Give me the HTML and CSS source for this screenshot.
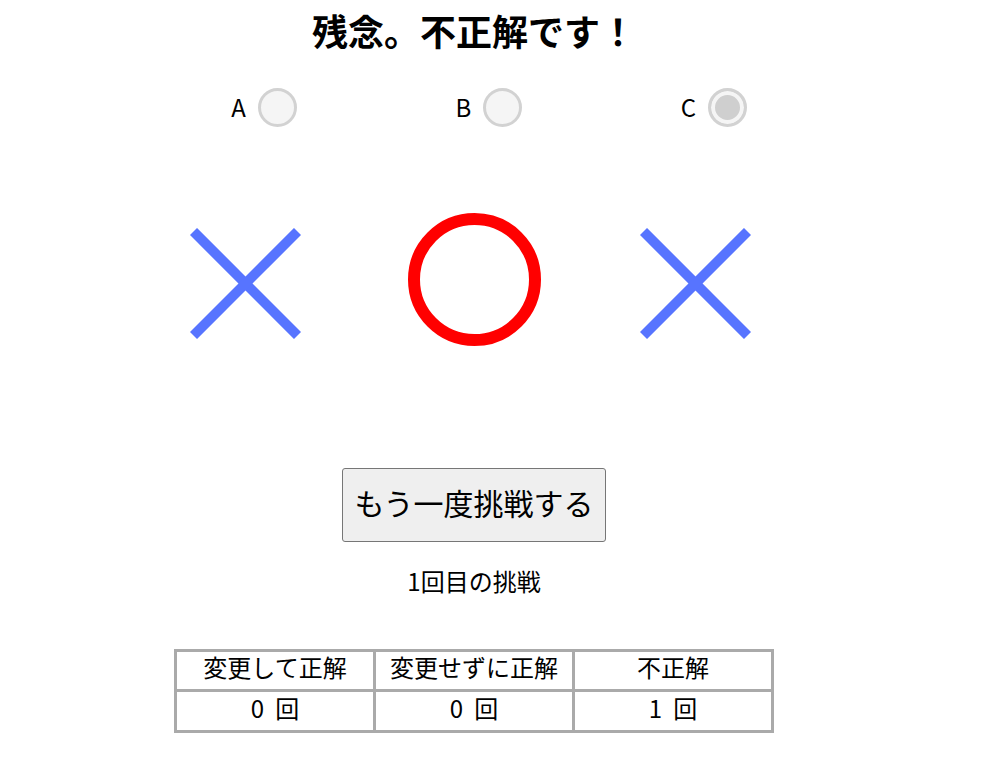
FILE: index.html
```html
<!DOCTYPE html>
<html lang="ja">
<head>
<meta charset="utf-8">
<title>モンティ・ホール</title>
<link rel="stylesheet" href="styles.css">
</head>
<body>
<main class="page">
  <h1 class="title">残念。不正解です！</h1>

  <div class="choices">
    <label class="choice">A <input type="radio" name="door" disabled></label>
    <label class="choice">B <input type="radio" name="door" disabled></label>
    <label class="choice">C <input type="radio" name="door" checked disabled></label>
  </div>

  <div class="doors">
    <div class="door">
      <svg class="mark-x" width="111" height="111" viewBox="0 0 111 111">
        <line x1="3.5" y1="3.5" x2="107.5" y2="107.5" />
        <line x1="107.5" y1="3.5" x2="3.5" y2="107.5" />
      </svg>
    </div>
    <div class="door">
      <svg class="mark-o" width="133" height="133" viewBox="0 0 133 133">
        <circle cx="66.5" cy="66.5" r="60.5" />
      </svg>
    </div>
    <div class="door">
      <svg class="mark-x" width="111" height="111" viewBox="0 0 111 111">
        <line x1="3.5" y1="3.5" x2="107.5" y2="107.5" />
        <line x1="107.5" y1="3.5" x2="3.5" y2="107.5" />
      </svg>
    </div>
  </div>

  <button class="retry" type="button">もう一度挑戦する</button>

  <p class="count">1回目の挑戦</p>

  <table class="stats">
    <tr>
      <td>変更して正解</td>
      <td>変更せずに正解</td>
      <td>不正解</td>
    </tr>
    <tr class="times">
      <td>0 回</td>
      <td>0 回</td>
      <td>1 回</td>
    </tr>
  </table>
</main>
</body>
</html>
```

FILE: styles.css
```css
html, body {
  margin: 0;
  padding: 0;
  background: #ffffff;
}

body {
  font-family: "Noto Sans CJK JP", "Noto Sans", sans-serif;
  font-size: 24px;
  color: #000;
}

.page {
  width: 948px;
  display: flex;
  flex-direction: column;
  align-items: center;
}

.title {
  font-size: 36px;
  font-weight: 700;
  line-height: 52px;
  margin: 4px 0 0;
}

.choices {
  display: grid;
  grid-template-columns: repeat(3, 225px);
  margin-top: 31px;
}

.choice {
  display: flex;
  align-items: center;
  justify-content: center;
  gap: 12px;
  padding-left: 30px;
  height: 40px;
  line-height: 1;
}

.choice input {
  appearance: none;
  -webkit-appearance: none;
  width: 39px;
  height: 39px;
  margin: 0;
  border: 3px solid #d2d2d2;
  border-radius: 50%;
  background: #f5f5f5;
  box-sizing: border-box;
}

.choice input:checked {
  background: #cfcfcf;
  box-shadow: inset 0 0 0 4px #f5f5f5;
}

.doors {
  display: grid;
  grid-template-columns: repeat(3, 225px);
  align-items: center;
  height: 133px;
  margin-top: 86px;
}

.door {
  display: flex;
  justify-content: center;
  align-items: center;
}

.mark-x {
  display: block;
  margin-top: 8px;
  margin-right: 7px;
}

.mark-x line {
  stroke: #5774ff;
  stroke-width: 10;
}

.mark-o {
  display: block;
}

.mark-o circle {
  fill: none;
  stroke: #ff0000;
  stroke-width: 12;
}

.retry {
  margin-top: 122px;
  height: 74px;
  padding: 0 11px 7px;
  font-family: inherit;
  font-size: 30px;
  color: #000;
  background: #efefef;
  border: 1px solid #767676;
  border-radius: 3px;
}

.count {
  margin: 21px 0 0;
  line-height: 35px;
}

.stats {
  margin-top: 51px;
  width: 600px;
  border-collapse: collapse;
  table-layout: fixed;
}

.stats td {
  border: 3px solid #aaaaaa;
  text-align: center;
  padding: 0 1px 7px;
  line-height: 30px;
  height: 30px;
}

.times td {
  word-spacing: 6px;
  padding-top: 1px;
}
```
